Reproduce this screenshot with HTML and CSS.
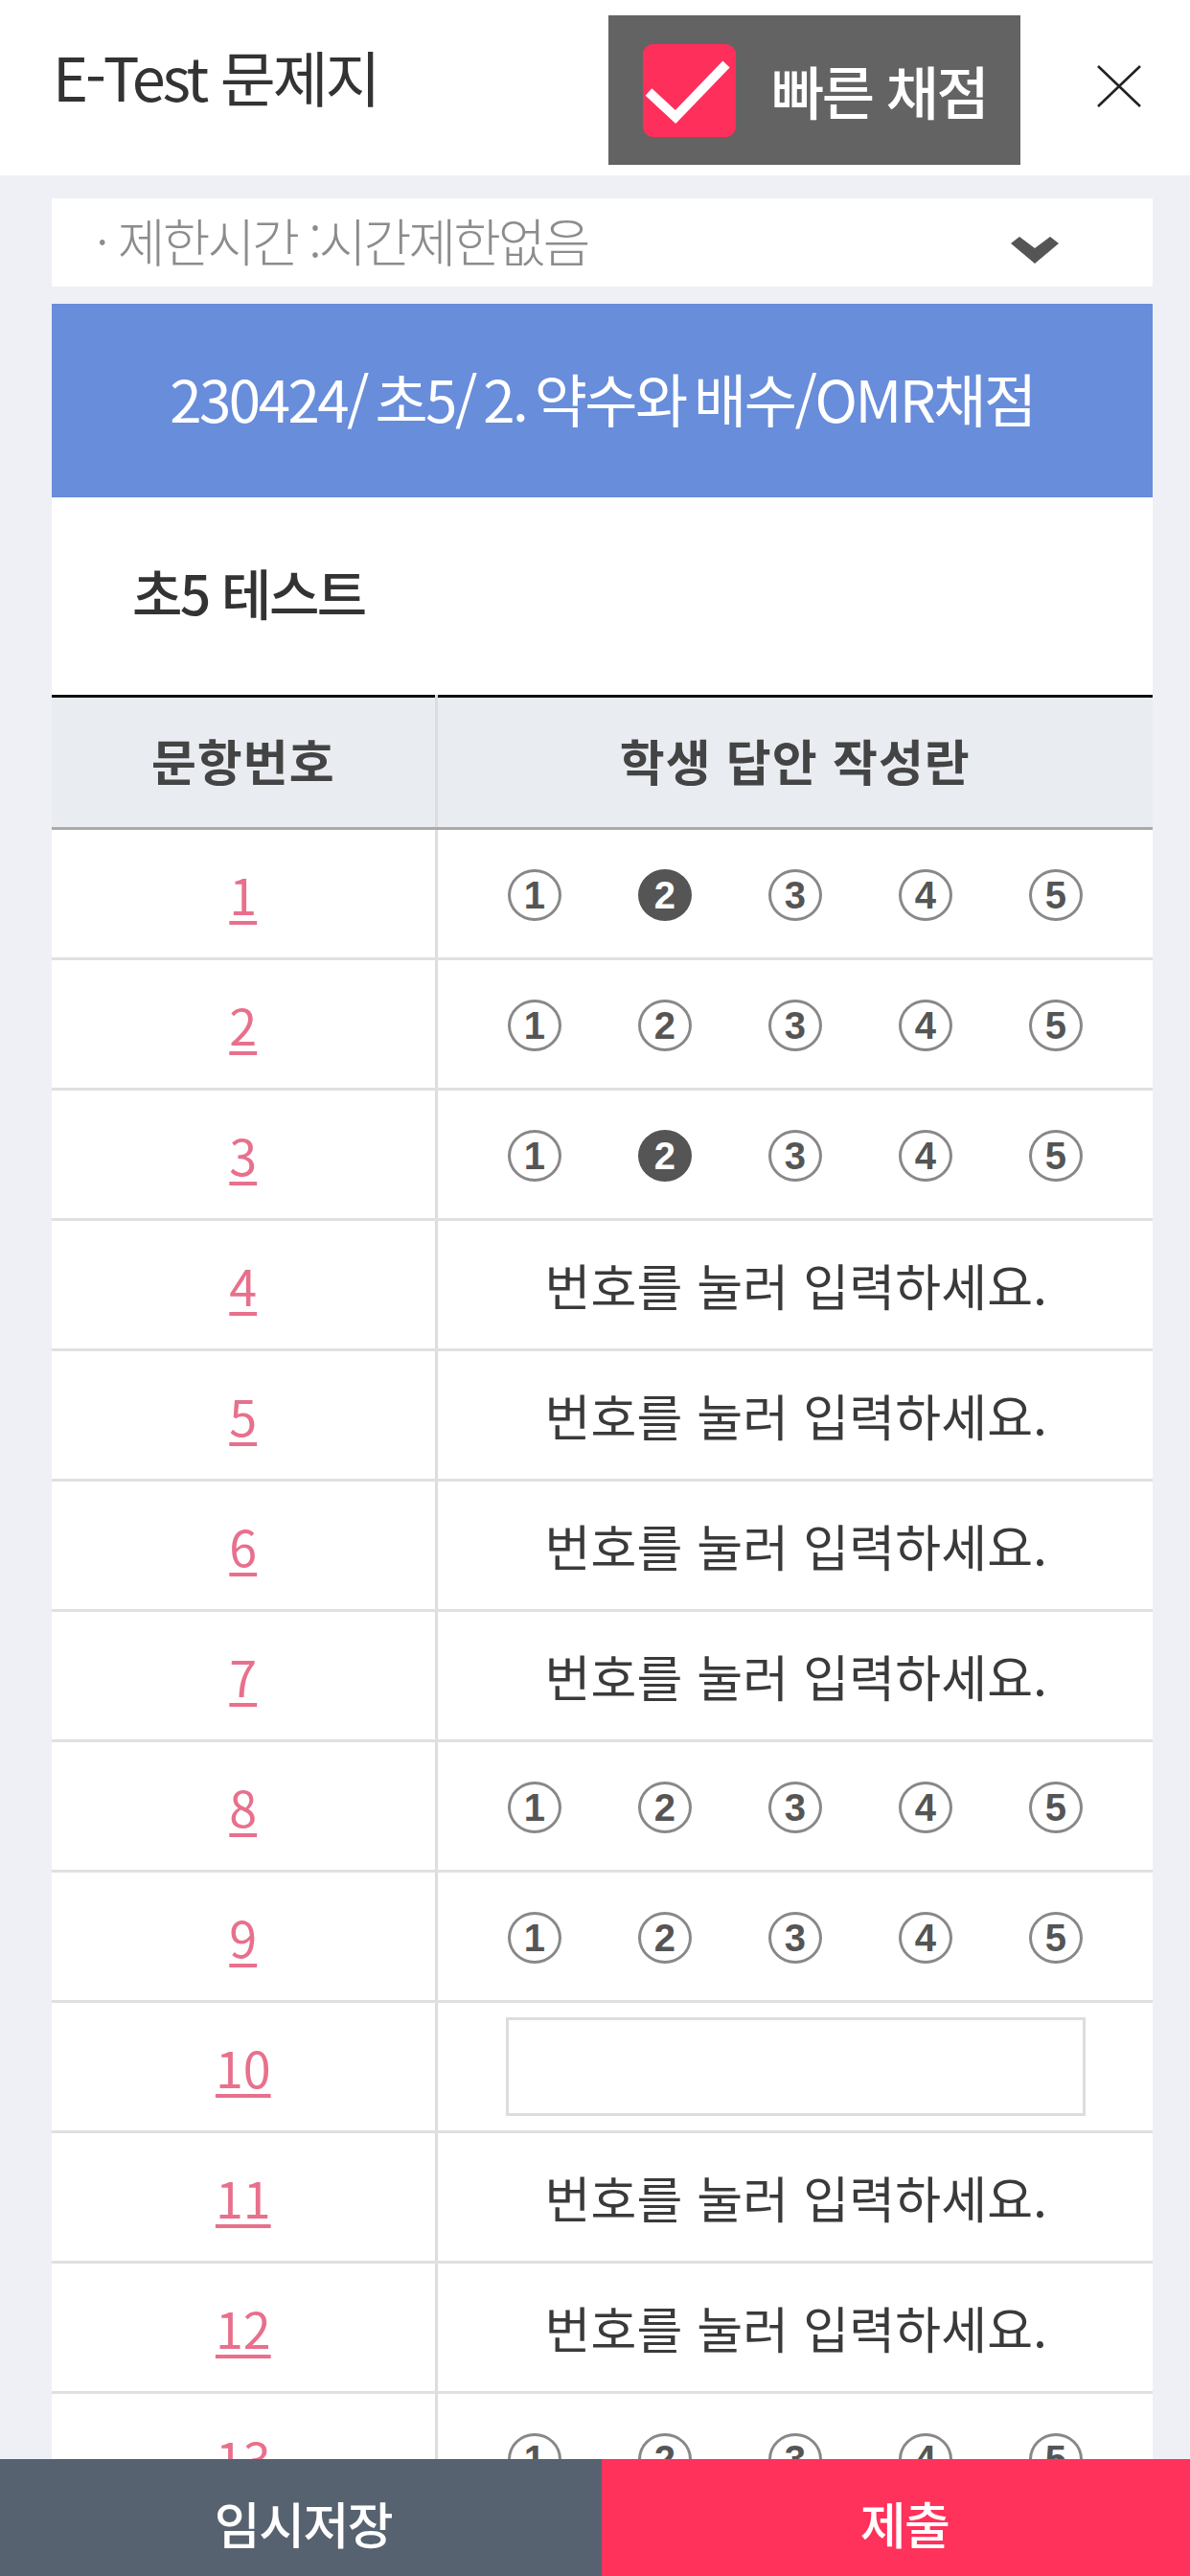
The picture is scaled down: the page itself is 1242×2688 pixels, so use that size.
FILE: index.html
```html
<!DOCTYPE html>
<html lang="ko">
<head>
<meta charset="utf-8">
<title>E-Test 문제지</title>
<link rel="stylesheet" href="styles.css">
</head>
<body>
<div class="app">
  <header class="top">
    <h1 class="top-title">E-Test 문제지</h1>
    <div class="quick">
      <svg class="quick-check" viewBox="0 0 97 97"><rect width="97" height="97" rx="11" fill="#ff2f5b"/><path d="M6 50 L34 76 L87 21" stroke="#fff" stroke-width="10" fill="none"/></svg>
      <span class="quick-label">빠른 채점</span>
    </div>
    <svg class="close" viewBox="0 0 46 44"><path d="M1 1 L45 43 M45 1 L1 43" stroke="#222" stroke-width="2.6" fill="none"/></svg>
  </header>
  <main class="content">
    <div class="limit">
      <span class="limit-text">· 제한시간 :시간제한없음</span>
      <svg class="chevron" viewBox="0 0 50 28"><path d="M0 7 L9 0 L25 12 L41 0 L50 7 L25 28 Z" fill="#555"/></svg>
    </div>
    <div class="banner">230424/ 초5/ 2. 약수와 배수/OMR채점</div>
    <div class="subject">초5 테스트</div>
    <table class="omr">
      <thead>
        <tr><th class="col-no">문항번호</th><th>학생 답안 작성란</th></tr>
      </thead>
      <tbody>
        <tr><td class="no"><a>1</a></td><td><div class="choices"><span class="c">1</span><span class="c on">2</span><span class="c">3</span><span class="c">4</span><span class="c">5</span></div></td></tr>
        <tr><td class="no"><a>2</a></td><td><div class="choices"><span class="c">1</span><span class="c">2</span><span class="c">3</span><span class="c">4</span><span class="c">5</span></div></td></tr>
        <tr><td class="no"><a>3</a></td><td><div class="choices"><span class="c">1</span><span class="c on">2</span><span class="c">3</span><span class="c">4</span><span class="c">5</span></div></td></tr>
        <tr><td class="no"><a>4</a></td><td class="hint">번호를 눌러 입력하세요.</td></tr>
        <tr><td class="no"><a>5</a></td><td class="hint">번호를 눌러 입력하세요.</td></tr>
        <tr><td class="no"><a>6</a></td><td class="hint">번호를 눌러 입력하세요.</td></tr>
        <tr><td class="no"><a>7</a></td><td class="hint">번호를 눌러 입력하세요.</td></tr>
        <tr><td class="no"><a>8</a></td><td><div class="choices"><span class="c">1</span><span class="c">2</span><span class="c">3</span><span class="c">4</span><span class="c">5</span></div></td></tr>
        <tr><td class="no"><a>9</a></td><td><div class="choices"><span class="c">1</span><span class="c">2</span><span class="c">3</span><span class="c">4</span><span class="c">5</span></div></td></tr>
        <tr><td class="no"><a>10</a></td><td><div class="answer"></div></td></tr>
        <tr><td class="no"><a>11</a></td><td class="hint">번호를 눌러 입력하세요.</td></tr>
        <tr><td class="no"><a>12</a></td><td class="hint">번호를 눌러 입력하세요.</td></tr>
        <tr><td class="no"><a>13</a></td><td><div class="choices"><span class="c">1</span><span class="c">2</span><span class="c">3</span><span class="c">4</span><span class="c">5</span></div></td></tr>
      </tbody>
    </table>
  </main>
  <footer class="bottom">
    <div class="btn save">임시저장</div>
    <div class="btn submit">제출</div>
  </footer>
</div>
</body>
</html>
```
FILE: styles.css
```css
* { box-sizing: border-box; }
html, body { margin: 0; padding: 0; }
body { width: 1242px; height: 2688px; overflow: hidden; background: #eff0f5; font-family: "Noto Sans CJK KR", "Noto Sans", sans-serif; color: #333; }
.app { position: relative; width: 1242px; height: 2688px; overflow: hidden; }
.top { height: 183px; background: #fff; display: flex; align-items: flex-start; padding: 16px 0 0 55px; }
.top-title { margin: 23px 0 0; font-size: 63px; line-height: 80px; font-weight: 400; letter-spacing: -3.1px; color: #333; width: 580px; }
.quick { width: 430px; height: 156px; background: #636363; display: flex; align-items: center; padding-left: 36px; }
.quick-check { width: 97px; height: 97px; }
.quick-label { margin-left: 37px; font-size: 60px; font-weight: 500; color: #fff; letter-spacing: -2.5px; line-height: 70px; }
.close { width: 46px; height: 44px; margin: 52px 0 0 80px; }
.content { padding: 24px 39px 0 54px; }
.limit { height: 92px; background: #fff; display: flex; justify-content: space-between; padding: 0 98px 0 46px; align-items: flex-start; }
.limit-text { font-size: 54px; line-height: 88px; color: #8c8c8c; letter-spacing: -2.9px; font-weight: 300; }
.chevron { width: 50px; height: 28px; margin-top: 40px; }
.banner { margin-top: 18px; height: 202px; background: #678ddb; color: #fff; font-size: 60px; letter-spacing: -2.5px; word-spacing: -6px; text-align: center; line-height: 196px; }
.subject { height: 206px; background: #fff; padding-left: 84px; font-size: 57px; font-weight: 500; letter-spacing: -2.6px; line-height: 196px; color: #333; }
.omr { width: 1149px; border-collapse: collapse; table-layout: fixed; background: #fff; border-top: 3px solid #111; }
.omr th { height: 138px; background: #e9edf1; font-size: 51px; line-height: 60px; font-weight: 700; color: #444; letter-spacing: 1px; border-bottom: 3px solid #aaa; border-left: 3px solid #ddd; padding: 0 0 5px; }
.omr th.col-no { width: 401px; border-left: 0; }
.omr td { height: 136px; border-bottom: 3px solid #e0e0e0; border-left: 3px solid #ddd; padding: 0; text-align: center; }
.omr td.no { border-left: 0; font-size: 52px; font-weight: 400; }
.no a { color: #e8708c; text-decoration: underline; text-decoration-thickness: 4px; text-underline-offset: 6px; }
.hint { font-size: 52px; font-weight: 400; color: #3a3a3a; letter-spacing: 0.2px; padding-left: 2px !important; }
.choices { display: flex; justify-content: center; gap: 80px; padding-top: 3px; }
.c { width: 56px; height: 54px; border: 3px solid #888; border-radius: 50%; display: flex; align-items: center; justify-content: center; font-size: 40px; font-weight: 700; color: #555; font-family: "Liberation Sans Narrow", "Liberation Sans", sans-serif; }
.c.on { background: #555; border-color: #555; color: #fff; }
.answer { width: 605px; height: 103px; margin-left: 71px; border: 3px solid #ddd; background: #fff; }
.bottom { position: absolute; left: 0; right: 0; bottom: 0; height: 122px; display: flex; }
.btn { display: flex; align-items: center; justify-content: center; font-size: 52px; font-weight: 500; color: #fff; letter-spacing: -1.5px; padding-top: 10px; }
.save { width: 628px; background: #56626f; padding-left: 5px; }
.submit { flex: 1; background: #ff325c; padding-left: 18px; }
```
